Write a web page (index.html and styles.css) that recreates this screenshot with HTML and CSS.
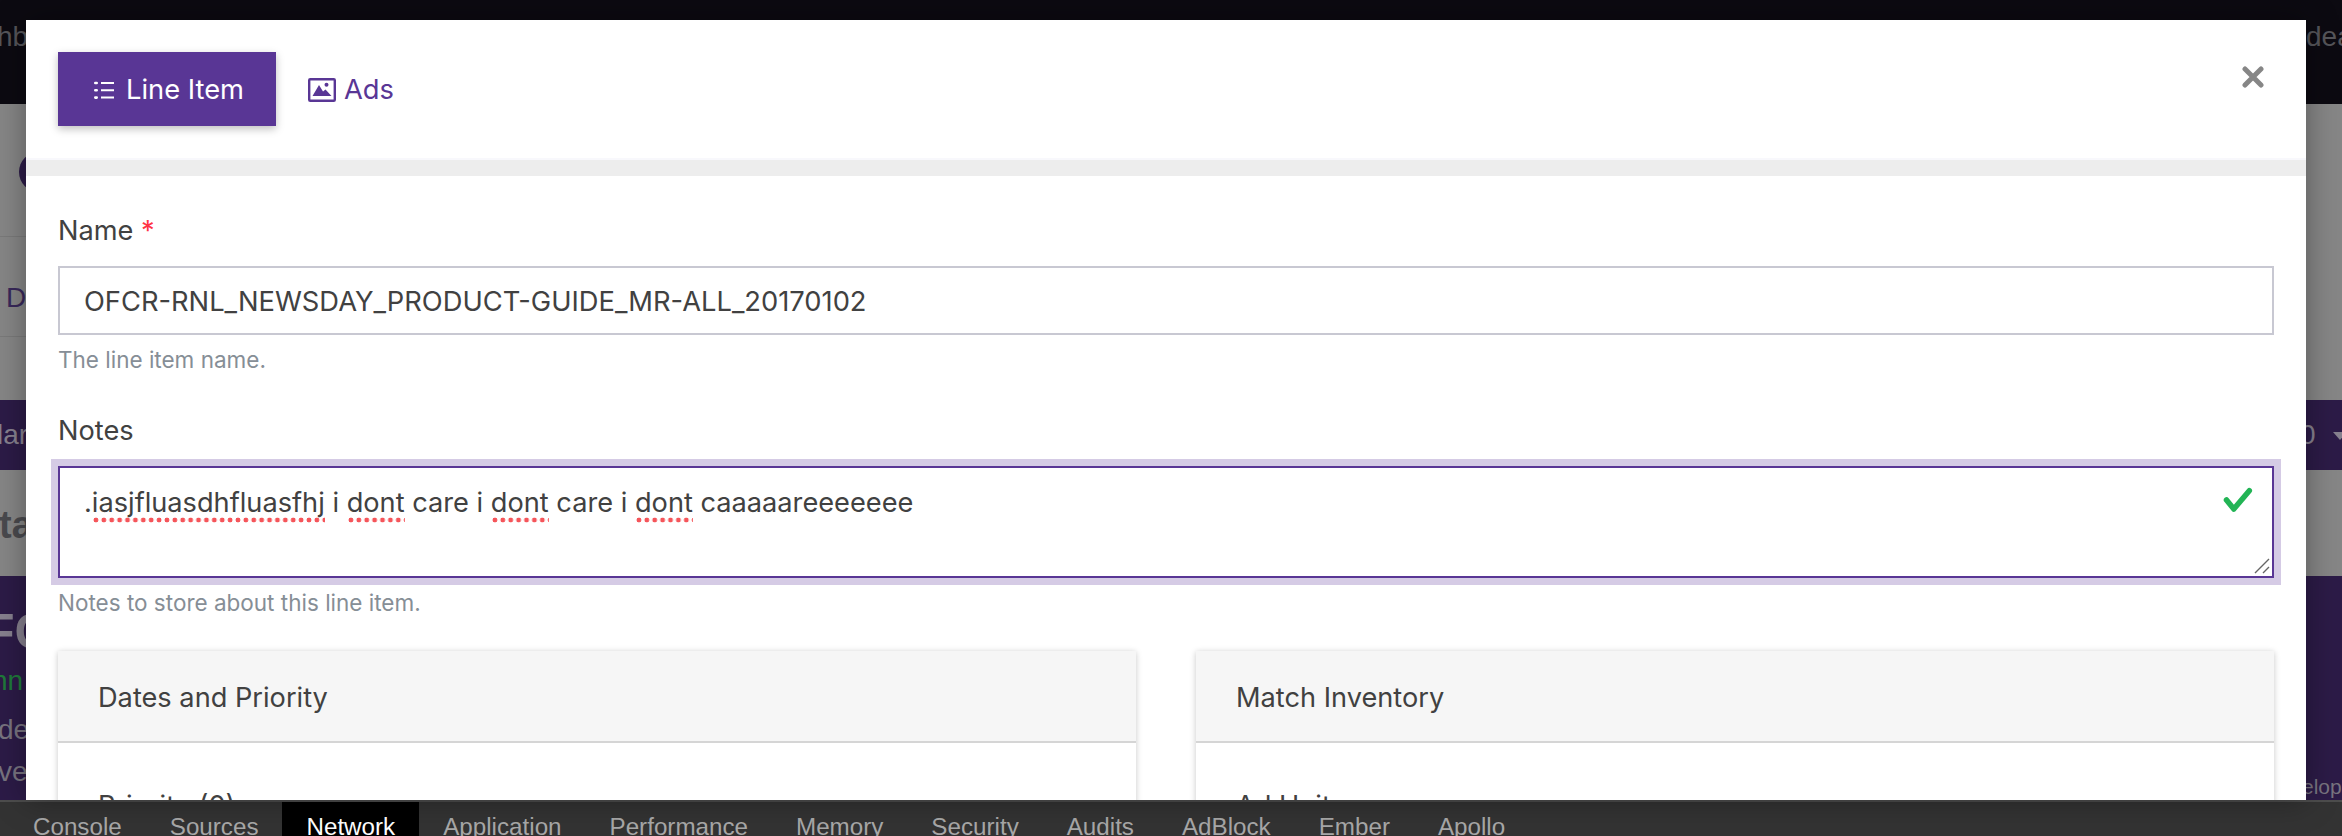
FILE: index.html
```html
<!DOCTYPE html>
<html lang="en">
<head>
  <meta charset="UTF-8">
  <title>Line Item</title>
  <link rel="stylesheet" href="styles.css">
</head>
<body>
  <!-- page behind the modal, only the edges show -->
  <div class="backdrop">
    <div class="bg-row bg-top">
      <div class="edge-left"><span class="top-text">hb</span></div>
      <div class="edge-right"><span class="top-text">dea</span></div>
    </div>
    <div class="bg-row bg-gray bg-gray-tall">
      <div class="edge-left">
        <div class="bg-circle"></div>
        <div class="bg-rule bg-rule-first"></div>
        <div class="bg-letter">D</div>
        <div class="bg-rule bg-rule-second"></div>
      </div>
    </div>
    <div class="bg-row bg-purple bg-purple-short">
      <div class="edge-left"><span class="bar-text bar-left">lar</span></div>
      <div class="edge-right"><span class="bar-text bar-right">0</span><span class="bar-caret"></span></div>
    </div>
    <div class="bg-row bg-gray bg-gray-short">
      <div class="edge-left"><span class="title-text">ta</span></div>
    </div>
    <div class="bg-row bg-purple bg-purple-tall">
      <div class="edge-left">
        <div class="big-text">FC</div>
        <div class="green-text">nn</div>
        <div class="small-text small-first">der</div>
        <div class="small-text">ver</div>
      </div>
      <div class="edge-right edge-bottom"><span class="dev-text">elop</span></div>
    </div>
  </div>

  <div class="modal">
    <div class="modal-header">
      <a class="tab tab-active">
        <svg class="icon-list" width="20" height="18" viewBox="0 0 20 18" fill="none" stroke="#fff" stroke-width="2">
          <path d="M7 2h13M7 9.300h13M7 16.600h13"/>
          <path d="M1.300 2h1.400M1.300 9.300h1.400M1.300 16.600h1.400" stroke-linecap="round" stroke-width="2.600"/>
        </svg>
        Line Item
      </a>
      <a class="tab tab-plain">
        <svg class="icon-image" width="28" height="24" viewBox="0 0 28 24">
          <rect x="1.200" y="1.200" width="25.600" height="21.600" fill="none" stroke="#593695" stroke-width="2.400" rx="1"/>
          <path d="M4.500 18L11 7l4 6.500 2.500-2 6 6.500z" fill="#593695"/>
          <circle cx="18.500" cy="6.800" r="2" fill="#593695"/>
        </svg>
        Ads
      </a>
      <svg class="close-icon" width="22" height="22" viewBox="0 0 22 22" fill="none" stroke="#868686" stroke-width="5" stroke-linecap="round">
        <path d="M3 3l16 16M19 3L3 19"/>
      </svg>
    </div>
    <div class="modal-strip"></div>
    <form class="modal-body">
      <label class="field-label">Name <span class="required">*</span></label>
      <div class="text-input">OFCR-RNL_NEWSDAY_PRODUCT-GUIDE_MR-ALL_20170102</div>
      <div class="hint">The line item name.</div>

      <label class="field-label">Notes</label>
      <div class="text-area">
        .<span class="misspelt">iasjfluasdhfluasfhj</span> i <span class="misspelt">dont</span> care i <span class="misspelt">dont</span> care i <span class="misspelt">dont</span> caaaaareeeeeee
        <svg class="check-icon" width="30" height="26" viewBox="0 0 30 26" fill="none" stroke="#22b455" stroke-width="5.500" stroke-linecap="round" stroke-linejoin="round">
          <path d="M3.500 13l7.300 9L26.300 3.700"/>
        </svg>
        <svg class="resize-grip" width="16" height="16" viewBox="0 0 16 16" stroke="#666" stroke-width="1.400">
          <path d="M1 15L15 1M9 15l6-6"/>
        </svg>
      </div>
      <div class="hint hint-notes">Notes to store about this line item.</div>

      <div class="cards">
        <div class="card">
          <div class="card-header">Dates and Priority</div>
          <div class="card-body">Priority (0)</div>
        </div>
        <div class="card">
          <div class="card-header">Match Inventory</div>
          <div class="card-body">Ad Units</div>
        </div>
      </div>
    </form>
  </div>

  <div class="devtools">
    <span class="dev-tab">Console</span>
    <span class="dev-tab">Sources</span>
    <span class="dev-tab dev-tab-active">Network</span>
    <span class="dev-tab">Application</span>
    <span class="dev-tab">Performance</span>
    <span class="dev-tab">Memory</span>
    <span class="dev-tab">Security</span>
    <span class="dev-tab">Audits</span>
    <span class="dev-tab">AdBlock</span>
    <span class="dev-tab">Ember</span>
    <span class="dev-tab">Apollo</span>
  </div>
</body>
</html>
```

FILE: styles.css
```css
html, body {
  margin: 0;
  padding: 0;
  height: 836px;
  overflow: hidden;
}
body {
  position: relative;
  font-family: Inter, "Noto Sans", sans-serif;
  color: #414141;
  background: #333;
}

/* backdrop */
.backdrop {
  height: 800px;
  overflow: hidden;
  font-family: "Liberation Sans", Arial, sans-serif;
}
.bg-row {
  display: flex;
  justify-content: space-between;
  overflow: hidden;
}
.edge-left {
  width: 26px;
  overflow: hidden;
  white-space: nowrap;
}
.edge-right {
  width: 36px;
  overflow: hidden;
  white-space: nowrap;
}
.bg-top {
  height: 104px;
  background: #0c0a11;
}
.bg-top .edge-left,
.bg-top .edge-right {
  padding-top: 20px;
}
.top-text {
  font-size: 28px;
  line-height: 34px;
  color: #55555a;
}
.edge-left .top-text {
  margin-left: -3px;
}
.bg-gray {
  background: #868686;
}
.bg-gray-tall {
  height: 296px;
}
.bg-gray-short {
  height: 106px;
}
.bg-purple {
  background: #2c1b47;
}
.bg-purple-short {
  height: 70px;
}
.bg-purple-tall {
  height: 224px;
}
.bg-circle {
  width: 40px;
  height: 40px;
  margin: 48px 0 0 19px;
  border-radius: 50%;
  background: #2c1b47;
}
.bg-rule {
  height: 1px;
  background: #7a7a7a;
}
.bg-rule-first {
  margin-top: 44px;
}
.bg-letter {
  margin: 44px 0 0 6px;
  font-size: 28px;
  line-height: 34px;
  color: #38285a;
}
.bg-rule-second {
  margin-top: 21px;
}
.bar-text {
  display: inline-block;
  margin-top: 18px;
  font-size: 28px;
  line-height: 34px;
  color: #86808e;
}
.bar-left {
  margin-left: -3px;
}
.bar-right {
  margin-left: -6px;
}
.bar-caret {
  display: inline-block;
  margin: 0 0 4px 17px;
  border-top: 8px solid #86808e;
  border-left: 7px solid transparent;
  border-right: 7px solid transparent;
}
.title-text {
  display: inline-block;
  margin-top: 32px;
  margin-left: -1px;
  font-size: 38px;
  line-height: 46px;
  font-weight: 700;
  color: #4a4a4e;
}
.big-text {
  margin-top: 28px;
  margin-left: -16px;
  font-size: 50px;
  line-height: 56px;
  font-weight: 700;
  color: #86808e;
}
.green-text {
  margin-top: 5px;
  margin-left: -8px;
  font-size: 28px;
  line-height: 32px;
  color: #1f7a3a;
}
.small-text {
  margin-left: -2px;
  font-size: 28px;
  line-height: 32px;
  color: #78747f;
}
.small-first {
  margin-top: 17px;
  margin-bottom: 10px;
}
.edge-bottom {
  align-self: flex-end;
}
.dev-text {
  display: block;
  margin-left: -4px;
  font-size: 21px;
  line-height: 26px;
  color: #78747f;
}

/* modal */
.modal {
  position: absolute;
  top: 20px;
  left: 26px;
  width: 2280px;
  height: 780px;
  overflow: hidden;
  background: #fff;
  box-shadow: 0 0 30px rgba(0, 0, 0, 0.35);
}
.modal-header {
  position: relative;
  display: flex;
  align-items: flex-start;
  gap: 32px;
  height: 106px;
  padding: 32px 32px 0;
}
.tab {
  display: flex;
  align-items: center;
  height: 74px;
  padding-top: 1px;
  box-sizing: border-box;
  font-size: 27.300px;
  color: #593695;
}
.tab-active {
  width: 218px;
  padding-left: 36px;
  gap: 12px;
  color: #fff;
  background: #593695;
  box-shadow: 0 3px 8px rgba(0, 0, 0, 0.25);
}
.tab-plain {
  gap: 8px;
}
.close-icon {
  position: absolute;
  top: 46px;
  right: 42px;
}
.modal-strip {
  height: 16px;
  border-top: 2px solid #f8f8fc;
  background: #ededed;
}
.modal-body {
  display: block;
  padding: 38px 32px 0;
}
.field-label {
  display: block;
  height: 34px;
  margin-bottom: 18px;
  font-size: 27.200px;
  line-height: 34px;
}
.required {
  color: #ff3344;
}
.text-input,
.text-area {
  box-sizing: border-box;
  line-height: 34px;
  padding: 0 24px;
  background: #fff;
  white-space: nowrap;
}
.text-input {
  height: 69px;
  padding-top: 17px;
  font-size: 27.300px;
  border: 2px solid #c8c8d2;
}
.text-area {
  position: relative;
  height: 112px;
  margin-top: 17px;
  padding-top: 18px;
  font-size: 27.200px;
  border: 2px solid #593695;
  box-shadow: 0 0 0 7px #d5cbe5;
}
.misspelt {
  padding-bottom: 4px;
  background: radial-gradient(circle, #f5555a 2.100px, transparent 2.700px) left bottom / 7.900px 6px repeat-x;
}
.check-icon {
  position: absolute;
  top: 19px;
  right: 19px;
}
.resize-grip {
  position: absolute;
  right: 2px;
  bottom: 2px;
}
.hint {
  height: 28px;
  margin-top: 11px;
  margin-bottom: 40px;
  font-size: 22.500px;
  line-height: 28px;
  color: #868e96;
}
.hint-notes {
  margin-bottom: 34px;
}
.cards {
  display: grid;
  grid-template-columns: 1fr 1fr;
  gap: 60px;
}
.card {
  height: 300px;
  background: #fff;
  box-shadow: 0 1px 6px rgba(0, 0, 0, 0.22);
}
.card-header {
  height: 90px;
  padding-left: 40px;
  font-size: 27.200px;
  line-height: 93px;
  background: #f6f6f6;
  border-bottom: 2px solid #d5d5d5;
}
.card-body {
  padding: 46px 40px 0;
  font-size: 27.200px;
  line-height: 34px;
}

/* devtools tab strip */
.devtools {
  display: flex;
  box-sizing: border-box;
  height: 36px;
  padding-left: 9px;
  overflow: hidden;
  background: #333;
  border-top: 2px solid #4d4d4d;
  font-family: "Liberation Sans", Arial, sans-serif;
}
.dev-tab {
  padding: 10px 24px 0;
  font-size: 24.200px;
  line-height: 30px;
  color: #a8a8a8;
  white-space: nowrap;
}
.dev-tab-active {
  color: #fff;
  background: #000;
}
```
